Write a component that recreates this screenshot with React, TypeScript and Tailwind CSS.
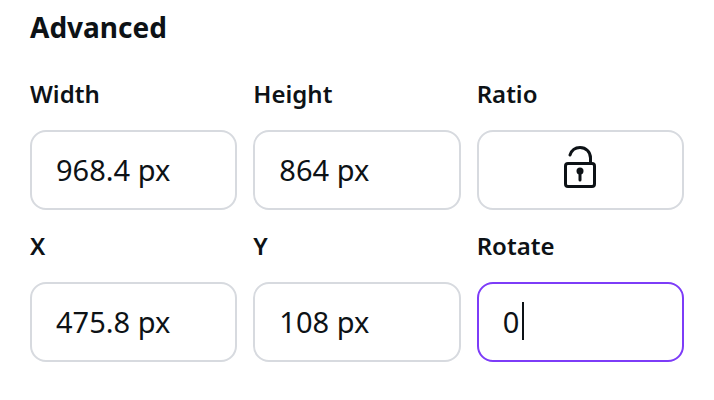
import { useId, useState } from "react";

type FieldProps = {
  label: string;
  initial: string;
  active?: boolean;
};

function Field({ label, initial, active = false }: FieldProps) {
  const id = useId();
  const [value, setValue] = useState(initial);
  return (
    <div className="flex min-w-0 flex-col gap-5">
      <label htmlFor={id} className="text-2xl font-semibold">
        {label}
      </label>
      <div className="relative">
        <input
          id={id}
          type="text"
          value={value}
          onChange={(e) => setValue(e.target.value)}
          className={`block h-20 w-full rounded-2xl border-2 bg-white px-6 pb-0.5 text-[29px] outline-none ${
            active ? "border-[#7d3cf8]" : "border-[#d7dadf]"
          }`}
        />
        {active && (
          <span
            aria-hidden="true"
            className="pointer-events-none absolute top-5 left-[45px] h-[38px] w-0.5 bg-[#0d1216]"
          />
        )}
      </div>
    </div>
  );
}

function UnlockedIcon() {
  return (
    <svg
      width="48"
      height="48"
      viewBox="0 0 48 48"
      fill="none"
      stroke="currentColor"
      strokeWidth="3"
      strokeLinecap="round"
      aria-hidden="true"
    >
      <rect x="9.5" y="17.5" width="29" height="23" rx="2.5" />
      <path d="M14 9C15.5 4.5 19 1.5 24 1.5C30 1.5 34.5 6 34.5 12V17" />
      <circle cx="24" cy="25" r="3.5" fill="currentColor" stroke="none" />
      <path d="M24 26V34" />
    </svg>
  );
}

export default function App() {
  const [locked, setLocked] = useState(false);
  return (
    <section className="bg-white px-[30px] pt-[7px] pb-9 font-['Noto_Sans','Open_Sans',sans-serif] text-[#0d1216]">
      <h2 className="text-[28px] leading-10 font-bold">Advanced</h2>
      <div className="mt-[31px] grid grid-cols-3 gap-x-4 gap-y-5">
        <Field label="Width" initial="968.4 px" />
        <Field label="Height" initial="864 px" />
        <div className="flex min-w-0 flex-col gap-5">
          <label htmlFor="ratio" className="text-2xl font-semibold">
            Ratio
          </label>
          <button
            id="ratio"
            type="button"
            aria-pressed={locked}
            onClick={() => setLocked(!locked)}
            className="flex h-20 w-full items-center justify-center rounded-2xl border-2 border-[#d7dadf] bg-white"
          >
            <UnlockedIcon />
          </button>
        </div>
        <Field label="X" initial="475.8 px" />
        <Field label="Y" initial="108 px" />
        <Field label="Rotate" initial="0" active />
      </div>
    </section>
  );
}
